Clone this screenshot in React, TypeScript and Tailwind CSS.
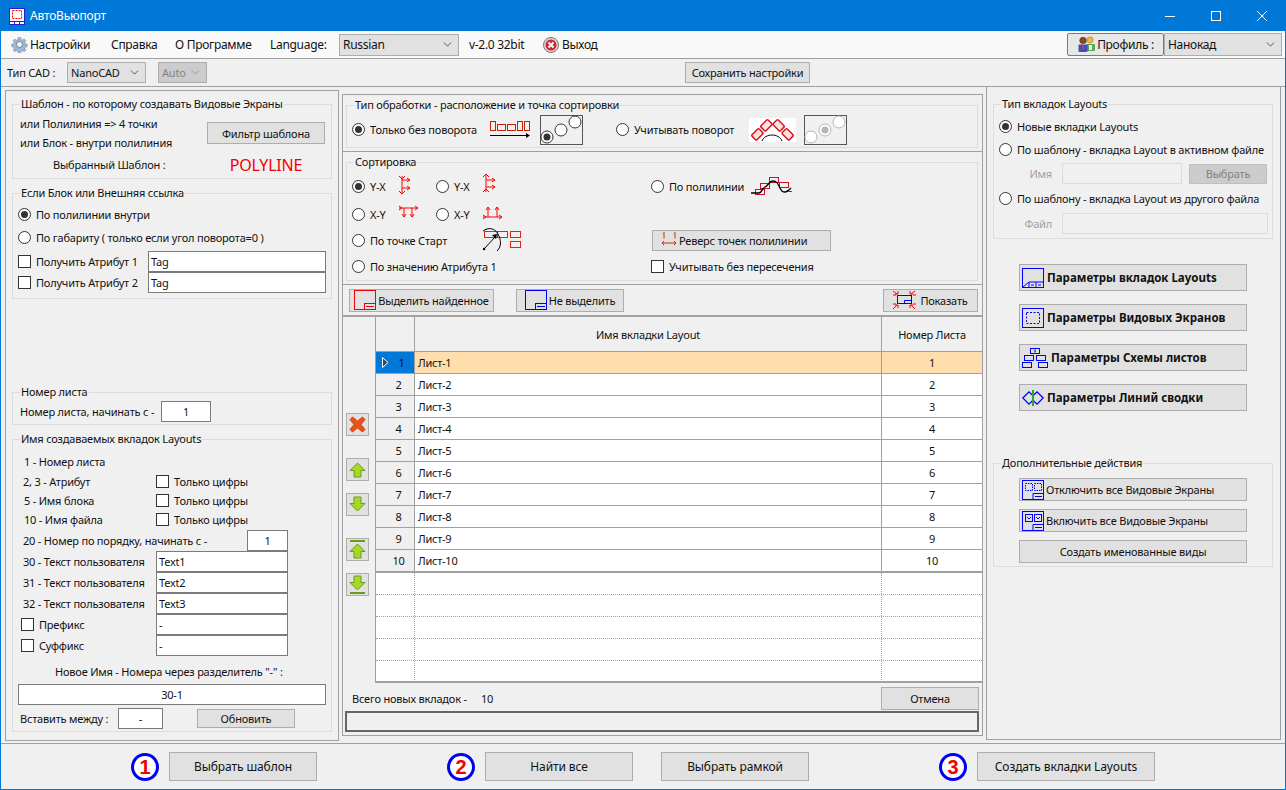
import type { ReactNode } from "react";
import { ChevronDown } from "lucide-react";

function Radio({ checked = false, label, size = "" }: { checked?: boolean; label?: string; size?: string }) {
  return (
    <span className={`flex items-center ${size}`}>
      <span className="flex h-[13px] w-[13px] shrink-0 items-center justify-center rounded-full border border-[#333] bg-white">
        {checked && <span className="h-[7px] w-[7px] rounded-full bg-[#333]" />}
      </span>
      {label && <span className="ml-[5px] whitespace-nowrap">{label}</span>}
    </span>
  );
}

function Check({ label, className = "" }: { label?: string; className?: string }) {
  return (
    <span className={`flex items-center ${className}`}>
      <span className="h-[13px] w-[13px] shrink-0 border border-[#333] bg-white" />
      {label && <span className="ml-[5px] whitespace-nowrap">{label}</span>}
    </span>
  );
}

function Btn({ children, className = "", disabled = false }: { children: ReactNode; className?: string; disabled?: boolean }) {
  return (
    <div className={`flex items-center justify-center whitespace-nowrap border ${disabled ? "border-[#bfbfbf] bg-[#cccccc] text-[#838383]" : "border-[#adadad] bg-[#e1e1e1]"} ${className}`}>
      {children}
    </div>
  );
}

function Field({ children, className = "", disabled = false }: { children?: ReactNode; className?: string; disabled?: boolean }) {
  return (
    <div className={`flex items-center border px-[2px] ${disabled ? "border-[#dcdcdc] bg-[#f0f0f0]" : "border-[#7a7a7a] bg-white"} ${className}`}>
      {children}
    </div>
  );
}

function Group({ title, children, className = "" }: { title: string; children: ReactNode; className?: string }) {
  return (
    <fieldset className={`border border-[#dcdcdc] ${className}`}>
      <legend className="ml-[7px] px-[1px] leading-[16px]">{title}</legend>
      {children}
    </fieldset>
  );
}

function Select({ value, className = "", disabled = false }: { value: string; className?: string; disabled?: boolean }) {
  return (
    <div className={`flex items-center justify-between border border-[#adadad] pl-[3px] pr-[4px] ${disabled ? "bg-[#cccccc] text-[#838383]" : "bg-[#e1e1e1]"} ${className}`}>
      <span>{value}</span>
      <ChevronDown size={13} strokeWidth={1.2} />
    </div>
  );
}

function AppIcon() {
  return (
    <svg width="16" height="17" viewBox="0 0 16 17" fill="none">
      <rect x="0.500" y="0.500" width="15" height="16" fill="#fff" stroke="#1f1fd0" />
      <rect x="3.500" y="2.500" width="9" height="8" stroke="#f00" strokeDasharray="2 1" />
      <path d="M0 13.500H16M5.500 13.500V17M10.500 13.500V17" stroke="#1f1fd0" />
    </svg>
  );
}

function GearIcon() {
  return (
    <svg width="17" height="17" viewBox="0 0 17 17">
      <g fill="#9db6d2" stroke="#6b8099" strokeWidth="0.5">
        <path d="M7 0.800h3l.4 2.100 1.500.6 1.800-1.200 2 2-1.200 1.800.6 1.500 2 .4v3l-2 .4-.6 1.500 1.200 1.800-2 2-1.800-1.200-1.500.6-.4 2H7l-.4-2-1.500-.6-1.800 1.200-2-2 1.200-1.800-.6-1.500-2-.4v-3l2-.4.6-1.500L1.300 4.500l2-2 1.800 1.200 1.500-.6z" transform="translate(0.800 0.800) scale(0.9)" />
      </g>
      <circle cx="8.500" cy="8.500" r="3" fill="#f2f5f8" stroke="#6b8099" />
    </svg>
  );
}

function ExitIcon() {
  return (
    <svg width="16" height="16" viewBox="0 0 16 16">
      <circle cx="8" cy="8" r="7.500" fill="#d9d9d9" stroke="#777" />
      <circle cx="8" cy="8" r="5.500" fill="#d8262c" />
      <path d="M5.500 5.500l5 5M10.500 5.500l-5 5" stroke="#fff" strokeWidth="2" />
    </svg>
  );
}

function ProfileIcon() {
  return (
    <svg width="19" height="17" viewBox="0 0 19 17">
      <circle cx="13" cy="4" r="3.200" fill="#f0b24a" stroke="#a8741e" strokeWidth="0.5" />
      <rect x="9" y="8" width="9" height="7" rx="1" fill="#54ad54" />
      <rect x="12" y="9" width="3" height="5" fill="#eef" />
      <circle cx="6" cy="4.500" r="3.300" fill="#8a4a22" stroke="#4c2610" strokeWidth="0.5" />
      <rect x="1.500" y="8.500" width="9" height="7.500" rx="1" fill="#3a4fc0" />
      <rect x="5" y="9.500" width="2" height="4" fill="#d33" />
    </svg>
  );
}

function StraightIcon() {
  return (
    <svg width="41" height="18" viewBox="0 0 41 18" fill="none" stroke="#c82000">
      <rect x="0.500" y="0.500" width="5" height="9" />
      <rect x="7.500" y="3.500" width="8" height="6" />
      <rect x="17.500" y="3.500" width="8" height="6" />
      <rect x="27.500" y="0.500" width="5" height="9" />
      <rect x="34.500" y="0.500" width="5" height="9" />
      <path d="M0 14.500H38" stroke="#000" />
      <path d="M36 12l4 2.500-4 2.500z" fill="#000" stroke="none" />
    </svg>
  );
}

function PointsBox({ active }: { active: number }) {
  const pts = [
    [7, 22],
    [21, 15],
    [35, 7],
  ];
  return (
    <svg width="43" height="30" viewBox="0 0 43 30" className="block">
      <rect x="0.500" y="0.500" width="42" height="29" fill="#f0f0f0" stroke="#555" />
      {pts.map(([x, y], i) => (
        <g key={i}>
          <circle cx={x} cy={y} r="6" fill="#fff" stroke={active === 0 ? "#333" : "#b5b5b5"} />
          {i === active && <circle cx={x} cy={y} r="3.500" fill={active === 0 ? "#333" : "#b5b5b5"} />}
        </g>
      ))}
    </svg>
  );
}

function RotateIcon() {
  return (
    <svg width="47" height="24" viewBox="0 0 47 24" className="block">
      <rect width="47" height="24" fill="#fff" />
      <g fill="#fbe0e0" stroke="#e01020" strokeWidth="1.500">
        <rect x="3" y="13" width="10" height="7" rx="1" transform="rotate(-45 8 16)" />
        <rect x="12" y="4" width="10" height="7" rx="1" transform="rotate(-45 17 7)" />
        <rect x="25" y="4" width="10" height="7" rx="1" transform="rotate(45 30 7)" />
        <rect x="34" y="13" width="10" height="7" rx="1" transform="rotate(45 39 16)" />
      </g>
      <path d="M13 23c3-8 17-8 20 0" fill="none" stroke="#000" />
    </svg>
  );
}

function AxisIcon({ kind }: { kind: number }) {
  const paths = [
    "M3 1v18M0 1l3 3 3-3M0 16l3 3 3-3M3 5h8M8 3l3 2-3 2M3 13h8M8 11l3 2-3 2",
    "M3 0v18M0 3l3-3 3 3M0 18l3-3 3 3M3 6h9M9 4l3 2-3 2M3 13h9M9 11l3 2-3 2",
    "M0 5h19M16 3l3 2-3 2M0 3l3 2-3 2M5 5v9M13 5v9M3 11l2 3 2-3M11 11l2 3 2-3",
    "M0 14h19M16 12l3 2-3 2M0 12l3 2-3 2M5 14V4M14 14V4M3 7l2-3 2 3M12 7l2-3 2 3",
  ];
  return (
    <svg width="20" height="20" viewBox="0 0 20 20" fill="none" stroke="#f00" className={kind === 1 ? "-mt-[5px]" : "-mt-[2px]"}>
      <path d={paths[kind]} />
    </svg>
  );
}

function PolylineIcon() {
  return (
    <svg width="43" height="20" viewBox="0 0 43 20" fill="none">
      <g stroke="#d01030">
        <rect x="5.500" y="13.500" width="9" height="5" />
        <rect x="10.500" y="7.500" width="9" height="5" />
        <rect x="19.500" y="1.500" width="9" height="5" />
        <rect x="29.500" y="6.500" width="9" height="5" />
        <path d="M37 15.500h5" />
      </g>
      <path d="M1 17h8c3 0 3-5 6-6 3-1 4-6 8-6s5 3 7 7 3 4 5 4 4-2 6-4" stroke="#000" strokeWidth="1.300" />
    </svg>
  );
}

function StartIcon() {
  return (
    <svg width="40" height="24" viewBox="0 0 40 24" fill="none">
      <g stroke="#f02000">
        <rect x="1.500" y="3.500" width="13" height="6" />
        <rect x="14.500" y="3.500" width="10" height="6" />
        <rect x="27.500" y="3.500" width="10" height="6" />
        <rect x="27.500" y="13.500" width="10" height="6" />
      </g>
      <path d="M0 3c5-4 12-3 15 3s4 12-1 17" stroke="#000" />
      <path d="M1 21L13 8" stroke="#000" />
      <path d="M9 7l5-1-1 5z" fill="#000" />
      <circle cx="1" cy="21" r="1.300" fill="#000" />
    </svg>
  );
}

function ReverseIcon() {
  return (
    <svg width="16" height="16" viewBox="0 0 16 16" fill="none" stroke="#c83000">
      <path d="M1 11h14M3 9l-2 2 2 2M13 9l2 2-2 2M2 1.500l1-1v6M13 1.500l1-1v6" strokeWidth="1" />
    </svg>
  );
}

function FrameIcon({ color }: { color: string }) {
  return (
    <svg width="22" height="20" viewBox="0 0 22 20" fill="none" stroke={color}>
      <rect x="0.500" y="0.500" width="21" height="19" strokeWidth="1" />
      <rect x="10.500" y="13.500" width="11" height="6" />
      <path d="M12 16.500h8" />
    </svg>
  );
}

function ShowIcon() {
  return (
    <svg width="23" height="20" viewBox="0 0 23 20" fill="none">
      <rect x="4.500" y="5.500" width="14" height="8" stroke="#00f" />
      <path d="M11.500 13.500v-3h7" stroke="#00f" />
      <path d="M0 1l4 3M2 4h3V1M22 1l-4 3M17 1v3h3M0 19l4-4M2 15h3v3M22 19l-4-4M17 18v-3h3M0 5h3M0 14h3M20 5h3M20 14h3" stroke="#f00" />
    </svg>
  );
}

function CrossIcon() {
  return (
    <svg width="17" height="17" viewBox="0 0 17 17">
      <path d="M3.500 1L8.500 5 13.500 1 16 3.500 12 8.500 16 13.500 13.500 16 8.500 12 3.500 16 1 13.500 5 8.500 1 3.500z" fill="#e4541c" stroke="#ce4412" />
    </svg>
  );
}

function ArrowIcon({ dir, bar = false }: { dir: "up" | "down"; bar?: boolean }) {
  const up = "M8.500 2L16 9.500H12V16H5V9.500H1z";
  return (
    <svg width="17" height="19" viewBox="0 0 17 19">
      <g transform={dir === "down" ? "rotate(180 8.500 9.500)" : undefined}>
        <path d={up} transform={bar ? "translate(0 2)" : "translate(0 1)"} fill="#a6d82a" stroke="#6f9a18" />
        {bar && <rect x="1" y="0" width="15" height="2" fill="#6f9a18" />}
      </g>
    </svg>
  );
}

function LayoutsIcon() {
  return (
    <svg width="22" height="20" viewBox="0 0 22 20" fill="none" stroke="#00f">
      <rect x="0.500" y="0.500" width="21" height="19" />
      <path d="M1 19l6-5h15M7 14v5M14 14v5M9 17h3M16 17h3" />
    </svg>
  );
}

function ViewportsIcon() {
  return (
    <svg width="22" height="20" viewBox="0 0 22 20" fill="none" stroke="#00f">
      <rect x="0.500" y="0.500" width="21" height="19" />
      <rect x="4.500" y="4.500" width="13" height="11" strokeDasharray="2 1.500" />
    </svg>
  );
}

function SchemeIcon() {
  return (
    <svg width="26" height="20" viewBox="0 0 26 20" fill="none" stroke="#00f">
      <rect x="8.500" y="0.500" width="9" height="5" />
      <path d="M13 1.500v3" stroke="#000" />
      <rect x="2.500" y="7.500" width="9" height="5" />
      <rect x="14.500" y="7.500" width="9" height="5" />
      <rect x="0.500" y="14.500" width="9" height="5" />
      <rect x="16.500" y="14.500" width="9" height="5" />
    </svg>
  );
}

function MatchIcon() {
  return (
    <svg width="22" height="16" viewBox="0 0 22 16" fill="none">
      <path d="M0.800 8L7 1.800l4 4v4.400l-4 4zM21.200 8L15 1.800l-4 4v4.400l4 4z" stroke="#00f" strokeWidth="1.300" />
      <rect x="10" y="0" width="2" height="16" fill="#22aa33" />
    </svg>
  );
}

function ViewportsOffIcon({ on }: { on: boolean }) {
  return (
    <svg width="22" height="20" viewBox="0 0 22 20" fill="none" stroke="#00f">
      <rect x="0.500" y="0.500" width="21" height="19" />
      <rect x="3.500" y="3.500" width="7" height="7" strokeDasharray={on ? undefined : "1.500 1"} />
      <rect x="12.500" y="3.500" width="7" height="7" strokeDasharray={on ? undefined : "1.500 1"} />
      {on && <path d="M5 6l2 2 2-2M14 6l2 2 2-2" />}
      <path d="M11 13.500h10.500v6H11zM13 16.500h7" />
    </svg>
  );
}

function Num({ n }: { n: number }) {
  return (
    <div className="flex h-[28px] w-[28px] shrink-0 items-center justify-center rounded-full border-[3px] border-[#0000f0] bg-white text-[20px] font-bold leading-none text-[#f00000] [font-family:'Liberation_Sans',sans-serif]">
      {n}
    </div>
  );
}

const rows = Array.from({ length: 10 }, (_, i) => i + 1);
const nameLabel = "h-[21px] flex items-center";

export default function App() {
  return (
    <div className="flex h-[790px] w-[1286px] flex-col overflow-hidden border border-[#0078d7] bg-[#f0f0f0] text-[11px] leading-none tracking-[-0.2px] text-[#111] [font-family:'Noto_Sans',sans-serif]">
      {/* title bar */}
      <div className="flex h-[30px] shrink-0 items-center bg-[#0078d7] pl-[8px] text-white">
        <AppIcon />
        <span className="ml-[5px] text-[12px]">АвтоВьюпорт</span>
        <div className="ml-auto flex">
          <div className="flex h-[30px] w-[46px] items-center justify-center">
            <svg width="10" height="10"><path d="M0 5.500H10" stroke="#fff" /></svg>
          </div>
          <div className="flex h-[30px] w-[46px] items-center justify-center">
            <svg width="10" height="10" fill="none"><rect x="0.500" y="0.500" width="9" height="9" stroke="#fff" /></svg>
          </div>
          <div className="flex h-[30px] w-[46px] items-center justify-center">
            <svg width="10" height="10"><path d="M0 0L10 10M10 0L0 10" stroke="#fff" /></svg>
          </div>
        </div>
      </div>

      {/* menu */}
      <div className="flex h-[27px] shrink-0 items-center bg-[#f9f9f9] pl-[10px] text-[12px] tracking-[-0.3px]">
        <GearIcon />
        <span className="ml-[2px] w-[81px]">Настройки</span>
        <span className="w-[64px]">Справка</span>
        <span className="w-[95px]">О Программе</span>
        <span className="w-[69px]">Language:</span>
        <Select value="Russian" className="h-[22px] w-[120px]" />
        <span className="ml-[10px] w-[74px]">v-2.0 32bit</span>
        <ExitIcon />
        <span className="ml-[3px]">Выход</span>
        <div className="ml-auto mr-[3px] flex">
          <div className="flex h-[23px] w-[97px] items-center justify-center gap-[1px] rounded-[2px] border border-[#7a7a7a] bg-[#e8e8e8]">
            <ProfileIcon />
            <span>Профиль :</span>
          </div>
          <Select value="Нанокад" className="h-[23px] w-[118px]" />
        </div>
      </div>

      {/* cad row */}
      <div className="flex h-[29px] shrink-0 items-center border-y border-[#a0a0a0] pl-[6px]">
        <span className="w-[60px]">Тип CAD :</span>
        <Select value="NanoCAD" className="h-[21px] w-[79px]" />
        <Select value="Auto" disabled className="ml-[12px] h-[21px] w-[49px]" />
        <Btn className="ml-[478px] h-[21px] w-[125px]">Сохранить настройки</Btn>
      </div>

      <div className="flex min-h-0 flex-1 pl-[4px]">
        {/* left panel */}
        <div className="mt-[3px] h-[651px] w-[334px] shrink-0 border border-[#a0a0a0] pl-[6px] pt-[5px]">
          <Group title="Шаблон - по которому создавать Видовые Экраны" className="h-[83px] w-[320px]">
            <div className="flex">
              <div className="ml-[7px] w-[187px]">
                <div className="mt-[1px] flex h-[20px] items-center">или Полилиния =&gt; 4 точки</div>
                <div className="flex h-[18px] items-center">или Блок - внутри полилиния</div>
                <div className="mt-[2px] flex h-[22px] items-center pl-[33px]">Выбранный Шаблон :</div>
              </div>
              <div className="flex flex-col items-center">
                <Btn className="mt-[10px] h-[22px] w-[118px]">Фильтр шаблона</Btn>
                <span className="mt-[13px] text-[16px] text-[#f00000]">POLYLINE</span>
              </div>
            </div>
          </Group>
          <Group title="Если Блок или Внешняя ссылка" className="mt-[6px] h-[114px] w-[320px]">
            <div className="ml-[5px] flex h-[23px] items-center pt-[3px]"><Radio checked label="По полилинии внутри" /></div>
            <div className="ml-[5px] flex h-[23px] items-center pt-[3px]"><Radio label="По габариту ( только если угол поворота=0 )" /></div>
            <div className="ml-[5px] mt-[4px] flex h-[21px] items-center">
              <Check label="Получить Атрибут 1" className="w-[130px]" />
              <Field className="h-[21px] w-[178px]">Tag</Field>
            </div>
            <div className="ml-[5px] flex h-[21px] items-center">
              <Check label="Получить Атрибут 2" className="w-[130px]" />
              <Field className="h-[21px] w-[178px]">Tag</Field>
            </div>
          </Group>
          <Group title="Номер листа" className="mt-[85px] h-[41px] w-[320px]">
            <div className="ml-[7px] flex h-[22px] items-center">
              <span className="w-[141px]">Номер листа, начинать с -</span>
              <Field className="h-[21px] w-[50px] justify-center">1</Field>
            </div>
          </Group>
          <Group title="Имя создаваемых вкладок Layouts" className="mt-[6px] h-[301px] w-[320px]">
            <div className="pl-[10px]">
              <div className="mt-[2px] flex h-[19px] items-center pl-[1px] pt-[6px]">1 - Номер листа</div>
              <div className="mt-[4px] flex h-[19px] items-center">
                <span className="w-[133px]">2, 3 - Атрибут</span>
                <Check label="Только цифры" />
              </div>
              <div className="flex h-[19px] items-center">
                <span className="w-[133px] pl-[1px]">5 - Имя блока</span>
                <Check label="Только цифры" />
              </div>
              <div className="flex h-[19px] items-center">
                <span className="w-[133px] pl-[1px]">10 - Имя файла</span>
                <Check label="Только цифры" />
              </div>
              <div className="mt-[1px] flex h-[21px] items-center">
                <span className="w-[224px]">20 - Номер по порядку, начинать с -</span>
                <Field className="h-[21px] w-[41px] justify-center">1</Field>
              </div>
              {["30", "31", "32"].map((n, i) => (
                <div key={n} className={nameLabel}>
                  <span className="w-[133px]">{n} - Текст пользователя</span>
                  <Field className="h-[21px] w-[132px]">{`Text${i + 1}`}</Field>
                </div>
              ))}
              <div className={nameLabel}>
                <Check label="Префикс" className="-ml-[2px] w-[135px]" />
                <Field className="h-[21px] w-[132px]">-</Field>
              </div>
              <div className={nameLabel}>
                <Check label="Суффикс" className="-ml-[2px] w-[135px]" />
                <Field className="h-[21px] w-[132px]">-</Field>
              </div>
              <div className="mt-[7px] flex h-[16px] items-center pl-[32px]">Новое Имя - Номера через разделитель "-" :</div>
              <Field className="-ml-[5px] mt-[5px] h-[21px] w-[308px] justify-center">30-1</Field>
              <div className="-ml-[3px] mt-[3px] flex h-[21px] items-center">
                <span className="w-[98px]">Вставить между :</span>
                <Field className="h-[21px] w-[45px] justify-center">-</Field>
                <Btn className="ml-[34px] h-[19px] w-[98px]">Обновить</Btn>
              </div>
            </div>
          </Group>
        </div>

        {/* middle panel */}
        <div className="h-[653px] w-[648px] shrink-0 border-r border-[#a0a0a0] pl-[3px] pt-[7px]">
          <div className="flex h-[642px] w-[641px] flex-col border border-[#a0a0a0]">
            <div className="h-[57px] shrink-0 border-b border-[#a0a0a0] pl-[3px] pt-[2px]">
              <Group title="Тип обработки - расположение и точка сортировки" className="h-[51px] w-[632px]">
                <div className="flex h-[33px] items-center pl-[5px]">
                  <Radio checked label="Только без поворота" size="w-[138px]" />
                  <StraightIcon />
                  <span className="ml-[9px]"><PointsBox active={0} /></span>
                  <span className="ml-[33px]"><Radio label="Учитывать поворот" size="w-[133px]" /></span>
                  <RotateIcon />
                  <span className="ml-[8px]"><PointsBox active={1} /></span>
                </div>
              </Group>
            </div>
            <div className="h-[133px] shrink-0 border-b border-[#a0a0a0] pl-[3px] pt-[2px]">
              <Group title="Сортировка" className="h-[127px] w-[632px]">
                <div className="pl-[5px]">
                  <div className="flex h-[27px] items-center pt-[5px]">
                    <Radio checked label="Y-X" size="w-[47px]" />
                    <span className="w-[37px]"><AxisIcon kind={0} /></span>
                    <Radio label="Y-X" size="w-[47px]" />
                    <span className="w-[168px]"><AxisIcon kind={1} /></span>
                    <Radio label="По полилинии" size="w-[99px]" />
                    <PolylineIcon />
                  </div>
                  <div className="mt-[4px] flex h-[26px] items-center">
                    <Radio label="X-Y" size="w-[47px]" />
                    <span className="w-[37px]"><AxisIcon kind={2} /></span>
                    <Radio label="X-Y" size="w-[47px]" />
                    <span className="w-[168px]"><AxisIcon kind={3} /></span>
                  </div>
                  <div className="flex h-[26px] items-center">
                    <Radio label="По точке Старт" size="w-[131px]" />
                    <span className="w-[169px]"><StartIcon /></span>
                    <Btn className="h-[21px] w-[179px] justify-start pl-[8px]">
                      <ReverseIcon />
                      <span className="ml-[2px]">Реверс точек полилинии</span>
                    </Btn>
                  </div>
                  <div className="flex h-[27px] items-center">
                    <Radio label="По значению Атрибута 1" size="w-[299px]" />
                    <Check label="Учитывать без пересечения" />
                  </div>
                </div>
              </Group>
            </div>
            <div className="flex h-[32px] shrink-0 items-center border-b-2 border-[#a0a0a0] pl-[6px] pr-[4px]">
              <Btn className="h-[23px] w-[145px]">
                <FrameIcon color="#f00000" />
                <span className="ml-[2px]">Выделить найденное</span>
              </Btn>
              <Btn className="ml-[22px] h-[23px] w-[108px]">
                <FrameIcon color="#0000f0" />
                <span className="ml-[2px]">Не выделить</span>
              </Btn>
              <Btn className="ml-auto h-[23px] w-[95px]">
                <ShowIcon />
                <span className="ml-[4px]">Показать</span>
              </Btn>
            </div>

            <div className="flex h-[366px] shrink-0">
              <div className="flex w-[33px] shrink-0 flex-col items-center border-r border-[#a0a0a0] pr-[3px] pt-[96px]">
                <Btn className="h-[23px] w-[23px]"><CrossIcon /></Btn>
                <Btn className="mt-[22px] h-[23px] w-[23px]"><ArrowIcon dir="up" /></Btn>
                <Btn className="mt-[12px] h-[23px] w-[23px]"><ArrowIcon dir="down" /></Btn>
                <Btn className="mt-[22px] h-[23px] w-[23px]"><ArrowIcon dir="up" bar /></Btn>
                <Btn className="mt-[12px] h-[23px] w-[23px]"><ArrowIcon dir="down" bar /></Btn>
              </div>
              <div className="flex h-[366px] w-[606px] flex-col overflow-hidden border-b-2 border-[#a0a0a0] bg-white">
                <div className="flex h-[35px] shrink-0 border-b border-[#a0a0a0] bg-[#f0f0f0]">
                  <div className="w-[39px] border-r border-[#a0a0a0]" />
                  <div className="flex w-[467px] items-center justify-center border-r border-[#a0a0a0]">Имя вкладки Layout</div>
                  <div className="flex flex-1 items-center justify-center">Номер Листа</div>
                </div>
                {rows.map((n) => (
                  <div key={n} className={`flex h-[22px] shrink-0 border-b border-[#a0a0a0] ${n === 1 ? "bg-[#ffdead]" : ""}`}>
                    <div className={`flex w-[39px] items-center justify-center border-r border-[#a0a0a0] ${n === 1 ? "bg-[#0078d7] pl-[2px]" : "bg-[#f0f0f0] pl-[7px]"}`}>
                      {n === 1 && (
                        <svg width="7" height="11" viewBox="0 0 7 11" className="mr-[9px]">
                          <path d="M0.500 0.500L6 5.500 0.500 10.500z" fill="#444" stroke="#fff" />
                        </svg>
                      )}
                      <span className={n === 1 ? "mr-[5px]" : ""}>{n}</span>
                    </div>
                    <div className="flex w-[467px] items-center border-r border-[#a0a0a0] pl-[3px]">{`Лист-${n}`}</div>
                    <div className="flex flex-1 items-center justify-center">{n}</div>
                  </div>
                ))}
                <div className="h-[1px] shrink-0 bg-[#a0a0a0]" />
                {[0, 1, 2, 3, 4].map((n) => (
                  <div key={n} className="flex h-[22px] shrink-0 border-b border-dotted border-[#a0a0a0]">
                    <div className="w-[39px] border-r border-dotted border-[#a0a0a0]" />
                    <div className="w-[467px] border-r border-dotted border-[#a0a0a0]" />
                    <div className="flex-1" />
                  </div>
                ))}
              </div>
            </div>

            <div className="flex h-[28px] shrink-0 items-end pb-[1px] pl-[9px] pr-[3px]">
              <span className="mb-[6px] w-[129px]">Всего новых вкладок -</span>
              <span className="mb-[6px]">10</span>
              <Btn className="ml-auto h-[23px] w-[98px]">Отмена</Btn>
            </div>
            <div className="ml-[2px] h-[21px] w-[634px] shrink-0 border-2 border-[#666]" />
          </div>
        </div>

        {/* right panel */}
        <div className="h-[653px] w-[294px] shrink-0 border-b border-r border-[#a0a0a0] pl-[6px] pt-[9px]">
          <Group title="Тип вкладок Layouts" className="h-[143px] w-[280px]">
            <div className="pl-[5px]">
              <div className="flex h-[28px] items-center"><Radio checked label="Новые вкладки Layouts" /></div>
              <div className="flex h-[18px] items-center"><Radio label="По шаблону - вкладка Layout в активном файле" /></div>
              <div className="mt-[5px] flex h-[21px] items-center">
                <span className="w-[53px] text-right text-[#a0a0a0]">Имя</span>
                <Field disabled className="ml-[10px] h-[21px] w-[120px]" />
                <Btn disabled className="ml-[7px] h-[20px] w-[78px]">Выбрать</Btn>
              </div>
              <div className="flex h-[29px] items-center"><Radio label="По шаблону - вкладка Layout из другого файла" /></div>
              <div className="flex h-[21px] items-center">
                <span className="w-[53px] text-right text-[#a0a0a0]">Файл</span>
                <Field disabled className="ml-[10px] h-[21px] w-[206px]" />
              </div>
            </div>
          </Group>
          <div className="ml-[26px] mt-[25px] flex w-[228px] flex-col gap-[13px] text-[11.500px] font-bold tracking-normal">
            <Btn className="h-[27px] justify-start pl-[2px]"><LayoutsIcon /><span className="ml-[3px]">Параметры вкладок Layouts</span></Btn>
            <Btn className="h-[27px] justify-start pl-[2px]"><ViewportsIcon /><span className="ml-[3px]">Параметры Видовых Экранов</span></Btn>
            <Btn className="h-[27px] justify-start pl-[2px]"><SchemeIcon /><span className="ml-[3px]">Параметры Схемы листов</span></Btn>
            <Btn className="h-[27px] justify-start pl-[2px]"><MatchIcon /><span className="ml-[3px]">Параметры Линий сводки</span></Btn>
          </div>
          <Group title="Дополнительные действия" className="mt-[44px] h-[112px] w-[280px]">
            <div className="pl-[25px] pt-[7px]">
              <Btn className="h-[23px] w-[228px] justify-start pl-[2px]"><ViewportsOffIcon on={false} /><span className="ml-[2px]">Отключить все Видовые Экраны</span></Btn>
              <Btn className="mt-[8px] h-[23px] w-[228px] justify-start pl-[2px]"><ViewportsOffIcon on /><span className="ml-[2px]">Включить все Видовые Экраны</span></Btn>
              <Btn className="mt-[8px] h-[23px] w-[228px]">Создать именованные виды</Btn>
            </div>
          </Group>
        </div>
      </div>

      {/* bottom bar */}
      <div className="flex h-[46px] shrink-0 items-center border-t border-[#a0a0a0] pl-[130px] text-[12px] tracking-[-0.1px]">
        <Num n={1} />
        <Btn className="ml-[10px] h-[29px] w-[148px]">Выбрать шаблон</Btn>
        <span className="ml-[130px]"><Num n={2} /></span>
        <Btn className="ml-[10px] h-[29px] w-[148px]">Найти все</Btn>
        <Btn className="ml-[28px] h-[29px] w-[148px]">Выбрать рамкой</Btn>
        <span className="ml-[130px]"><Num n={3} /></span>
        <Btn className="ml-[10px] h-[29px] w-[178px]">Создать вкладки Layouts</Btn>
      </div>
    </div>
  );
}
